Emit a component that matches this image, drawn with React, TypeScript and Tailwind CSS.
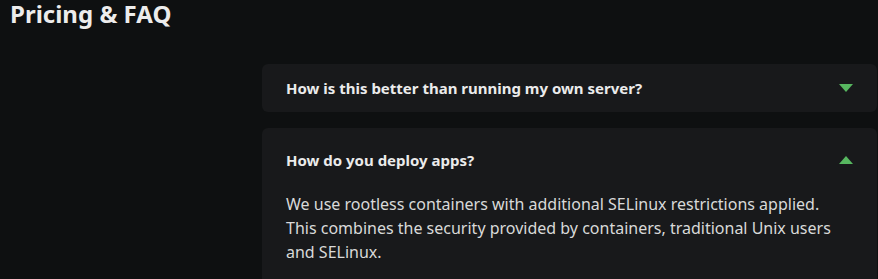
import React from "react";

const faqs = [
  {
    q: "How is this better than running my own server?",
    a: "",
    open: false,
  },
  {
    q: "How do you deploy apps?",
    a: "We use rootless containers with additional SELinux restrictions applied. This combines the security provided by containers, traditional Unix users and SELinux.",
    open: true,
  },
];

function Caret({ up }: { up: boolean }) {
  return (
    <svg width="14" height="8" viewBox="0 0 14 8" className="shrink-0">
      {up ? <polygon points="7,0 14,8 0,8" fill="#57b760" /> : <polygon points="0,0 14,0 7,8" fill="#57b760" />}
    </svg>
  );
}

export default function App() {
  return (
    <div className="min-h-[279px] bg-[#0e1011] font-['Noto_Sans',sans-serif] text-[#e4e4e4]">
      <h1 className="pl-[10px] text-[24px] font-bold leading-[28px] text-[#ececec]">Pricing &amp; FAQ</h1>
      <div className="grid grid-cols-[262px_1fr] pr-[1px] pt-[36px]">
        <div />
        <div className="flex flex-col gap-4">
          {faqs.map((f) => (
            <div
              key={f.q}
              className={
                f.open
                  ? "rounded-md bg-[#18191b] px-6 pb-6 pt-[20px]"
                  : "rounded-md bg-[#18191b] px-6 py-3"
              }
            >
              <div className="flex items-center justify-between">
                <span className="text-[15px] font-bold leading-6 text-[#ebebeb]">{f.q}</span>
                <Caret up={f.open} />
              </div>
              {f.open && (
                <p className="mt-[20px] text-[16px] leading-6 text-[#d9d9d9]">{f.a}</p>
              )}
            </div>
          ))}
        </div>
      </div>
    </div>
  );
}
